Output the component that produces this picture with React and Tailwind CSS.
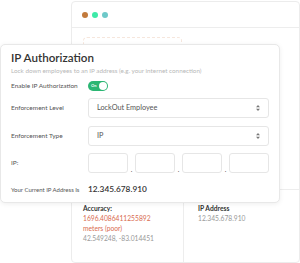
function Caret() {
  return (
    <svg width="4" height="6" viewBox="0 0 4 6" className="shrink-0">
      <path d="M2 0 L4 2.2 L0 2.2 Z" fill="#777" />
      <path d="M2 6 L4 3.8 L0 3.8 Z" fill="#777" />
    </svg>
  )
}

function Select({ value }) {
  return (
    <div className="w-[181px] h-[20px] border border-[#e6e6e6] rounded-[3px] px-[8px] flex items-center justify-between text-[7.3px] text-[#555]">
      <span>{value}</span>
      <Caret />
    </div>
  )
}

function Row({ label, children, className = '' }) {
  return (
    <div className={`flex items-center ${className}`}>
      <div className="w-[77px] shrink-0 text-[6.5px] text-[#555]">{label}</div>
      {children}
    </div>
  )
}

export default function App() {
  const octets = [0, 1, 2, 3]

  return (
    <div
      className="relative w-[300px] h-[263px] bg-white overflow-hidden"
      style={{ fontFamily: 'Lato, "Open Sans", sans-serif' }}
    >
      {/* back window */}
      <div className="ml-[71px] mt-[1px] w-[229px] h-[262px] border border-[#ececec] rounded-[4px] bg-white flex flex-col">
        <div className="h-[26px] shrink-0 border-b border-[#ededed] flex items-center gap-[4px] pl-[10px]">
          <span className="w-[6px] h-[6px] rounded-full bg-[#c27a3c]" />
          <span className="w-[6px] h-[6px] rounded-full bg-[#3deaa8]" />
          <span className="w-[6px] h-[6px] rounded-full bg-[#6ec9c9]" />
        </div>
        <div className="flex-1">
          <div className="ml-[11px] mt-[9px] w-[99px] h-[30px] border border-dashed border-[#f6e6dc] rounded-[4px]" />
        </div>
        <div className="h-[73px] shrink-0 border-t border-[#ededed] grid grid-cols-[112px_1fr] text-[6.7px] leading-[10px]">
          <div className="border-r border-[#ededed] pl-[11px] pt-[13px]">
            <div className="font-bold text-[#333]">Accuracy:</div>
            <div className="text-[#d96b4f]">1696.4086411255892</div>
            <div className="text-[#d96b4f]">meters (poor)</div>
            <div className="text-[#999]">42.549248, -83.014451</div>
          </div>
          <div className="pl-[14px] pt-[13px]">
            <div className="font-bold text-[#333]">IP Address</div>
            <div className="text-[#999]">12.345.678.910</div>
          </div>
        </div>
      </div>

      {/* front card */}
      <div className="absolute left-0 top-[44px] w-[280px] h-[159px] bg-white border border-[#e8e8e8] rounded-[5px] shadow-[0_1px_5px_rgba(0,0,0,0.07)] pl-[10px] pt-[5px] flex flex-col">
        <div className="text-[11.6px] leading-[16px] font-semibold text-[#333]">IP Authorization</div>
        <div className="text-[6.3px] leading-[9px] text-[#b8b8b8]">
          Lock down employees to an IP address (e.g. your internet connection)
        </div>

        <Row label="Enable IP Authorization" className="mt-[6px] h-[10px]">
          <div className="w-[20px] h-[10px] rounded-full bg-[#2bb673] flex items-center justify-between pl-[3px] pr-[1px]">
            <span className="text-[4px] leading-none text-white font-bold">On</span>
            <span className="w-[8px] h-[8px] rounded-full bg-white" />
          </div>
        </Row>

        <Row label="Enforcement Level" className="mt-[7px]">
          <Select value="LockOut Employee" />
        </Row>

        <Row label="Enforcement Type" className="mt-[8px]">
          <Select value="IP" />
        </Row>

        <Row label="IP:" className="mt-[7px]">
          <div className="flex items-end">
            {octets.map((i) => (
              <div key={i} className="flex items-end">
                {i > 0 && (
                  <span className="w-[7px] text-center text-[7px] leading-[8px] text-[#555]">.</span>
                )}
                <div className="w-[40px] h-[20px] border border-[#e6e6e6] rounded-[3px]" />
              </div>
            ))}
          </div>
        </Row>

        <div className="flex items-center mt-[10px] h-[12px]">
          <div className="w-[77px] shrink-0 text-[6px] text-[#555]">Your Current IP Address Is</div>
          <div className="text-[8.3px] font-semibold text-[#333]">12.345.678.910</div>
        </div>
      </div>
    </div>
  )
}
